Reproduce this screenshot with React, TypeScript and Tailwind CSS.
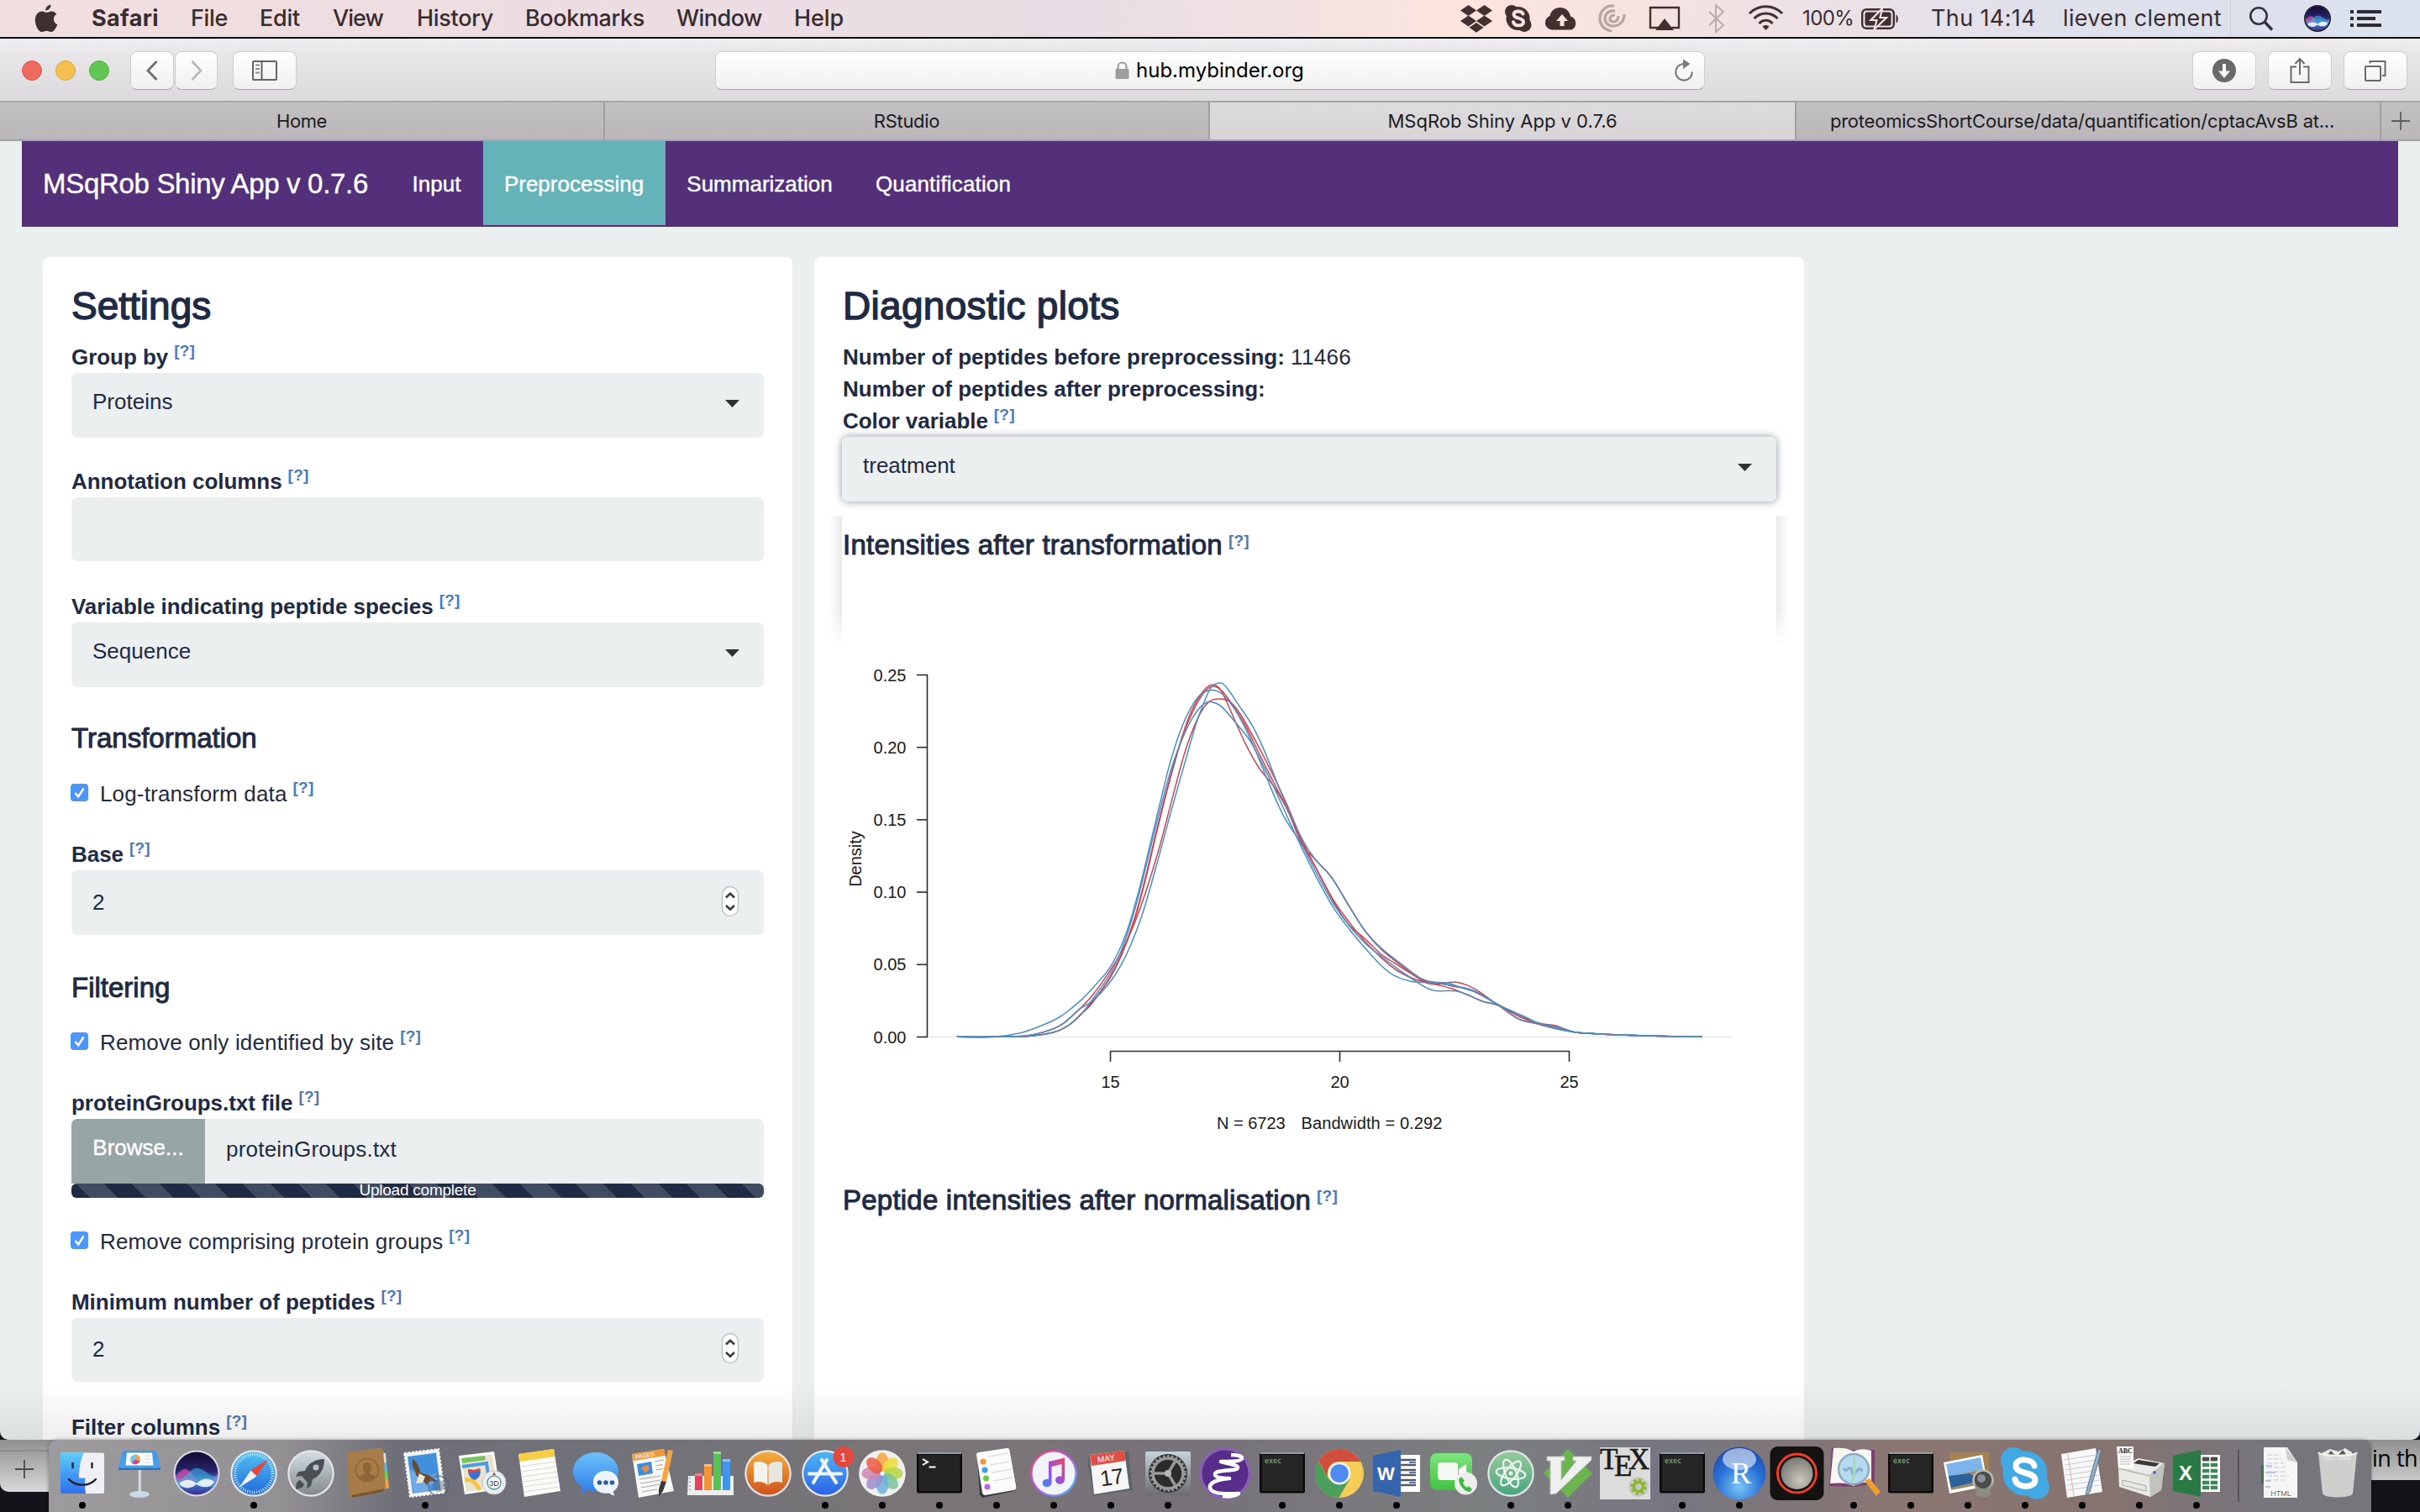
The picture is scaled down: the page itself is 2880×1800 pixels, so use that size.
import type { ReactNode } from "react";

/* ---------- menu bar ---------- */

const menus = [
  { label: "Safari", cls: "w-[118px] font-bold tracking-[0.37px]" },
  { label: "File", cls: "w-[82px] tracking-[-0.35px]" },
  { label: "Edit", cls: "w-[87px] tracking-[-0.24px]" },
  { label: "View", cls: "w-[100px] tracking-[-0.94px]" },
  { label: "History", cls: "w-[129px] tracking-[-0.3px]" },
  { label: "Bookmarks", cls: "w-[180px] tracking-[-0.36px]" },
  { label: "Window", cls: "w-[140px] tracking-[-0.51px]" },
  { label: "Help", cls: "w-[60px] tracking-[-0.12px]" },
];

function MenuBar() {
  return (
    <div className="flex h-[46px] shrink-0 items-start border-b-2 border-black bg-linear-to-r from-[#f1dedf] via-[#eadde4] via-38% to-[#dbe2ee]">
      <div className="flex h-11 w-full items-center bg-linear-to-r from-transparent from-45% via-[#fde4de] via-60% to-transparent to-85% text-[27px] leading-[44px] font-medium text-[#3a2b2e]">
        <svg className="ml-[41px] h-[34px] w-[28px] shrink-0" viewBox="0 0 28 34" fill="#3e3031">
          <path d="M19.5 0.5c.3 3.6-2.800 7-6.200 7C12.900 4 16.200.8 19.500.5z" />
          <path d="M14.400 10c1.600 0 3.400-1.500 6-1.500 2.200 0 4.500 1.200 6 3.300-5.200 3-4.400 10.300.9 12.400C25.900 28.300 22.900 33 20 33c-2.200 0-2.900-1.300-5.600-1.300S10.700 33 8.700 33C5 33 .8 25.400.8 19c0-6.300 4-10.400 8-10.400 2.400 0 4.200 1.400 5.600 1.400z" />
        </svg>
        <div className="ml-[40px] flex font-[Inter,sans-serif]">
          {menus.map((m) => (
            <span key={m.label} className={m.cls}>
              {m.label}
            </span>
          ))}
        </div>
        <svg className="ml-auto h-[44px] w-[390px] shrink-0" viewBox="1738 0 390 44" fill="#432f2f">
          <path d="M1750.500 6l9.500 6.500-9.500 6.500-9.500-6.500zM1769.500 6l9.500 6.500-9.500 6.500-9.500-6.500zM1750.500 18.500l9.500 6.500-9.500 6.500-9.500-6.500zM1769.500 18.500l9.500 6.500-9.500 6.500-9.500-6.500zM1760 27l8.500 5.700-8.500 6-8.500-6z" />
          <circle cx="1802" cy="14" r="8" />
          <circle cx="1817" cy="29.500" r="8.500" />
          <circle cx="1809.500" cy="22" r="14" />
          <path d="M1815.500 16.500c-2-4.500-11-4-11 .8 0 5.700 11.500 2.900 11.500 8.900 0 5.300-10.500 5.800-12 0" fill="none" stroke="#f8e4e1" strokeWidth="4" strokeLinecap="round" />
          <path d="M1850 35.500a8.500 8.500 0 0 1-2.500-16.500c1-6 6-10 12-10 7 0 11.500 4.500 12.500 10.500a8.500 8.500 0 0 1 1 16z" />
          <path d="M1862 17l7 8h-4.500v6h-5v-6h-4.500z" fill="#f9e5e1" />
          <g fill="none" stroke="#432f2f" strokeOpacity=".35" strokeWidth="3.200">
            <path d="M1924 7c-10-1-17 6-17 15 0 8 6 14 14 15" />
            <path d="M1925 13c-7-1-12 3-12 9 0 5 4 9 9 9 8 0 14-5 14-14" />
            <path d="M1925 18c-4 0-6 2-6 4.500s2 3.500 4 3.500c4 0 6-3 6-7" />
          </g>
          <path d="M1976 33h-9V9h34v24h-9" fill="none" stroke="#432f2f" strokeWidth="2.400" />
          <path d="M1984 22l11 14h-22z" />
          <path d="M2037 14l17 16-9 8V6l9 8-17 16" fill="none" stroke="#432f2f" strokeOpacity=".3" strokeWidth="2" />
          <g fill="none" stroke="#3f2f31" strokeWidth="3">
            <path d="M2085 16c11-11 28-11 39 0" />
            <path d="M2090.500 22c8-8 20-8 28 0" />
            <path d="M2096.500 28c5-5 11-5 16 0" />
          </g>
          <path d="M2104.500 36l-4-4.500c2-2 6-2 8 0z" />
        </svg>
        <span className="ml-[20px] w-[70px] shrink-0 font-[Inter,sans-serif] text-[24px] font-normal tracking-[-0.6px]">100%</span>
        <svg className="h-[44px] w-[46px] shrink-0" viewBox="0 0 46 44" fill="#3f2f31">
          <rect x="1.200" y="11.200" width="37.600" height="22.600" rx="5" fill="none" stroke="#3f2f31" strokeWidth="2.400" />
          <rect x="4.500" y="14.500" width="31" height="16" rx="2.500" />
          <path d="M41.500 17.500c3 1 3 9 0 10z" />
          <path d="M25 10L11.500 24h7l-3 11L30 21h-7.500z" stroke="#f3e4e6" strokeWidth="2.200" />
        </svg>
        <span className="ml-[37px] w-[157px] shrink-0 font-[Inter,sans-serif] font-normal tracking-[0.38px]">Thu 14:14</span>
        <span className="w-[199px] shrink-0 font-[Inter,sans-serif] font-normal tracking-[0.35px]">lieven clement</span>
        <div className="h-full w-px shrink-0 bg-[#d4cedb]" />
        <svg className="ml-[20px] h-[44px] w-[32px] shrink-0" viewBox="0 0 32 44" fill="none" stroke="#36303a" strokeWidth="2.600">
          <circle cx="13" cy="19" r="9.700" />
          <path d="M20 26l9 9.500" strokeWidth="3.400" />
        </svg>
        <svg className="ml-[35px] h-[32px] w-[32px] shrink-0" viewBox="6 6 56 56">
          <SiriArt />
          <circle cx="34" cy="34" r="26.500" fill="none" stroke="#23202e" strokeWidth="3" />
        </svg>
        <svg className="mr-[46px] ml-[23px] h-[44px] w-[37px] shrink-0" viewBox="0 0 37 44" fill="#2e2b36">
          <path d="M0 12h4v4H0zM8 12h29v4H8zM0 20h4v4H0zM8 20h22v4H8zM0 28h4v4H0zM8 28h29v4H8z" />
        </svg>
      </div>
    </div>
  );
}

/* ---------- browser chrome ---------- */

const chromeButton =
  "flex h-[46px] items-center justify-center rounded-[8px] border border-[#cfcdd0] border-b-[#a9a7aa] bg-linear-to-b from-white to-[#f1f0f1]";

function Toolbar() {
  return (
    <div className="flex h-[74px] shrink-0 items-center rounded-t-[10px] bg-linear-to-b from-[#f0eef1] via-[#e9e7ea] via-20% to-[#dcdadd] pt-[2px] pr-[15px] pl-[26px]">
      <div className="flex gap-4">
        <div className="size-6 rounded-full border border-[#d6574c] bg-[#ee6a5f]" />
        <div className="size-6 rounded-full border border-[#d9a43c] bg-[#f5bf4f]" />
        <div className="size-6 rounded-full border border-[#54ad41] bg-[#62c655]" />
      </div>
      <div className={`ml-[25px] w-[52px] ${chromeButton}`}>
        <svg className="h-6 w-4" viewBox="0 0 16 24" fill="none" stroke="#6f6e70" strokeWidth="2.800">
          <path d="M13.500 1L3 12l10.500 11" />
        </svg>
      </div>
      <div className={`ml-px w-[51px] ${chromeButton}`}>
        <svg className="h-6 w-4" viewBox="0 0 16 24" fill="none" stroke="#b9b8ba" strokeWidth="2.800">
          <path d="M2.500 1L13 12 2.500 23" />
        </svg>
      </div>
      <div className={`ml-[18px] w-[76px] ${chromeButton}`}>
        <svg className="h-[26px] w-[32px]" viewBox="0 0 32 26" fill="none" stroke="#646365" strokeWidth="2">
          <rect x="2" y="2" width="28" height="22" rx="1" />
          <path d="M12.500 2v22" />
          <path d="M5 6.500h5M5 11h5M5 15.500h5" stroke="#8d8c8e" />
        </svg>
      </div>
      <div className="ml-[498px] flex h-[46px] w-[1178px] items-center rounded-[8px] border border-[#cfcdd0] border-b-[#a9a7aa] bg-linear-to-b from-white to-[#f1f0f1]">
        <svg className="ml-[475px] h-[22px] w-[17px]" viewBox="0 0 17 22">
          <rect x="0.500" y="9" width="16" height="12" rx="1" fill="#9c9b9d" />
          <path d="M3.500 10V6.500a5 5 0 0 1 10 0V10" fill="none" stroke="#9c9b9d" strokeWidth="2.200" />
        </svg>
        <span className="ml-[8px] font-[Inter,sans-serif] text-[24px] leading-[44px] text-black">hub.mybinder.org</span>
        <svg className="mr-[12px] ml-auto h-[30px] w-[24px]" viewBox="0 0 24 30" fill="none" stroke="#7b7a7c" strokeWidth="2.200">
          <path d="M11 7a9.800 9.800 0 1 0 10.800 9.500" />
          <path d="M11 1.500l8.500 5.500-8.500 6z" fill="#7b7a7c" stroke="none" />
        </svg>
      </div>
      <div className="ml-auto flex gap-[14px]">
        <div className={`w-[76px] ${chromeButton}`}>
          <svg className="size-[30px]" viewBox="0 0 30 30">
            <circle cx="15" cy="15" r="14" fill="#6a696b" />
            <path d="M13 7h4v8.500h5L15 24l-7-8.500h5z" fill="#fafafa" />
          </svg>
        </div>
        <div className={`w-[76px] ${chromeButton}`}>
          <svg className="h-[34px] w-[26px]" viewBox="0 0 26 34" fill="none" stroke="#6a696b" strokeWidth="2">
            <path d="M9 12.500H2.500v18.500h21V12.500H17" />
            <path d="M13 22V3M7.500 9L13 3l5.500 6" />
          </svg>
        </div>
        <div className={`w-[76px] ${chromeButton}`}>
          <svg className="size-[28px]" viewBox="0 0 28 28" fill="none" stroke="#6a696b" strokeWidth="2">
            <rect x="2" y="9" width="18" height="17" rx="1" />
            <path d="M7.500 5.500V3h18v17H22" />
          </svg>
        </div>
      </div>
    </div>
  );
}

function TabStrip() {
  const tab = "flex h-full items-center justify-center border-r-2 border-[#a19fa2]";
  return (
    <div className="flex h-[48px] shrink-0 border-y-2 border-[#a5a3a6] bg-linear-to-b from-[#c2c0c3] to-[#b9b7ba] font-[Inter,sans-serif] text-[22px] leading-[44px] text-[#1c1b1d]">
      <div className={`w-[720px] tracking-[-0.41px] ${tab}`}>Home</div>
      <div className={`w-[720px] tracking-[-0.3px] ${tab}`}>RStudio</div>
      <div className={`w-[698px] bg-linear-to-b from-[#dddbde] to-[#d6d4d7] ${tab}`}>MSqRob Shiny App v 0.7.6</div>
      <div className={`w-[696px] pr-[14px] tracking-[-0.22px] ${tab}`}>
        proteomicsShortCourse/data/quantification/cptacAvsB at...
      </div>
      <div className="flex flex-1 items-center justify-center">
        <svg className="size-[22px]" viewBox="0 0 22 22" stroke="#5f5e60" strokeWidth="1.800">
          <path d="M11 0v22M0 11h22" />
        </svg>
      </div>
    </div>
  );
}

/* ---------- page ---------- */

function NavBar() {
  return (
    <div className="mx-[26px] flex h-[102px] shrink-0 bg-[#54307b] text-[26px] leading-[102px] text-white [-webkit-text-stroke:0.4px_white]">
      <div className="w-[439px] pl-[25px] text-[33px] tracking-[-0.31px]">MSqRob Shiny App v 0.7.6</div>
      <div className="w-[110px] pr-px text-center">Input</div>
      <div className="h-[100px] w-[217px] bg-[#64b3b9] pr-px text-center">Preprocessing</div>
      <div className="w-[224px] text-center">Summarization</div>
      <div className="w-[213px] text-center tracking-[0.16px]">Quantification</div>
    </div>
  );
}

function Help() {
  return <span className="ml-[7px] align-[10px] text-[19px] leading-[0] font-bold tracking-[0.2px] text-[#4a7ab8]">[?]</span>;
}

function Label({ children }: { children: ReactNode }) {
  return (
    <div className="h-[38px] text-[26px] leading-[38px] font-bold tracking-[-0.04px]">
      {children}
      <Help />
    </div>
  );
}

function Heading({ children, help }: { children: ReactNode; help?: boolean }) {
  return (
    <div className="h-[44px] pt-px text-[33px] leading-[44px]">
      <span className="[-webkit-text-stroke:1px]">{children}</span>
      {help && <Help />}
    </div>
  );
}

function Caret() {
  return (
    <svg className="mb-[3px] h-[9px] w-[17px]" viewBox="0 0 17 9" fill="#2f3133">
      <path d="M0 0h17L8.500 9z" />
    </svg>
  );
}

function SelectBox({ value }: { value?: string }) {
  return (
    <div className="flex h-[76.500px] items-center justify-between rounded-[7px] bg-[#ebeff0] pr-[29px] pl-[25px]">
      <span className="pb-[9px] text-[26px] leading-[38px]">{value}</span>
      {value && <Caret />}
    </div>
  );
}

function NumberBox({ value }: { value: string }) {
  return (
    <div className="flex h-[76.500px] items-center justify-between rounded-[7px] bg-[#ebeff0] pr-[29px] pl-[25px]">
      <span className="pb-px text-[26px] leading-[38px]">{value}</span>
      <svg className="mb-[3px] h-[38px] w-[22px]" viewBox="0 0 22 38">
        <rect x="1.500" y="1.500" width="19" height="35" rx="9.500" fill="#fff" stroke="#bfc1c2" strokeWidth="1.400" />
        <path d="M6 14.500l5-4.800 5 4.800M6 24l5 4.800 5-4.800" fill="none" stroke="#3c3c3c" strokeWidth="2.600" />
      </svg>
    </div>
  );
}

function CheckRow({ children }: { children: ReactNode }) {
  return (
    <div className="flex h-[38px] items-center text-[26px] leading-[38px] tracking-[0.16px]">
      <svg className="-ml-px mr-[14px] mb-[3px] size-[21px]" viewBox="0 0 21 21">
        <rect width="21" height="21" rx="4" fill="#4d95f7" />
        <path d="M5.500 11l3.700 4.500 6.300-10" fill="none" stroke="#fff" strokeWidth="2.400" />
      </svg>
      <span>
        {children}
        <Help />
      </span>
    </div>
  );
}

function Settings() {
  return (
    <section className="h-[1500px] w-[892px] shrink-0 rounded-[8px] bg-white pt-[30px] pr-[34px] pl-[34px]">
      <h2 className="mb-[14px] h-[56px] text-[46px] leading-[56px] [-webkit-text-stroke:1.4px]">Settings</h2>
      <Label>Group by</Label>
      <SelectBox value="Proteins" />
      <div className="h-[33px]" />
      <Label>Annotation columns</Label>
      <SelectBox />
      <div className="h-[35px]" />
      <Label>Variable indicating peptide species</Label>
      <SelectBox value="Sequence" />
      <div className="h-[38.500px]" />
      <Heading>Transformation</Heading>
      <div className="h-[25.500px]" />
      <CheckRow>Log-transform data</CheckRow>
      <div className="h-[34.500px]" />
      <Label>Base</Label>
      <NumberBox value="2" />
      <div className="h-[40px]" />
      <Heading>Filtering</Heading>
      <div className="h-[25px]" />
      <CheckRow>Remove only identified by site</CheckRow>
      <div className="h-[34px]" />
      <Label>proteinGroups.txt file</Label>
      <div className="flex h-[77px] overflow-hidden rounded-t-[7px] bg-[#ebeff0] text-[26px] leading-[38px]">
        <div className="w-[159px] bg-[#97a5a6] pt-[15px] text-center text-white [-webkit-text-stroke:0.4px_white]">Browse...</div>
        <div className="pt-[17px] pl-[25px] tracking-[0.21px]">proteinGroups.txt</div>
      </div>
      <div className="h-[17px] rounded-[6px] bg-[#1f2a44] bg-[linear-gradient(45deg,rgba(255,255,255,.15)_25%,transparent_25%,transparent_50%,rgba(255,255,255,.15)_50%,rgba(255,255,255,.15)_75%,transparent_75%)] bg-[length:66px_66px] bg-[position:6px_0px] text-center text-[19px] leading-[15px] tracking-[-0.24px] text-white">
        Upload complete
      </div>
      <div className="h-[33px]" />
      <CheckRow>Remove comprising protein groups</CheckRow>
      <div className="h-[34px]" />
      <Label>Minimum number of peptides</Label>
      <NumberBox value="2" />
      <div className="h-[34.500px]" />
      <Label>Filter columns</Label>
    </section>
  );
}

/* Density curves, as control points on a local grid of the plot. */
type Pt = [number, number];
const outerTail: Pt[] = [[-421, 1333], [-300, 1332], [-227, 1320], [-165, 1296], [-103, 1263], [-41, 1208]];
const midTail: Pt[] = [[-421, 1333], [-300, 1333], [-200, 1328], [-130, 1308], [-90, 1285], [-41, 1235]];
const innerTail: Pt[] = [[-421, 1333], [-300, 1333], [-206, 1331], [-124, 1318], [-72, 1290], [-31, 1247]];
const end: Pt[] = [[1500, 1316], [1568, 1322], [1700, 1328], [1800, 1331], [1897, 1333]];
const RED = "#cc4450";
const BLUE = "#4a8ec4";

const curves: { color: string; pts: Pt[] }[] = [
  { color: RED, pts: [...midTail, [0, 1185], [50, 1105], [90, 1030], [130, 930], [165, 820], [210, 650], [250, 475], [290, 308], [330, 190], [362, 137], [395, 126], [430, 138], [460, 180], [500, 260], [550, 370], [600, 490], [650, 625], [700, 740], [760, 870], [800, 935], [850, 985], [900, 1040], [940, 1070], [1010, 1120], [1060, 1142], [1120, 1162], [1170, 1185], [1220, 1208], [1265, 1222], [1320, 1255], [1390, 1284], [1440, 1293], ...end] },
  { color: RED, pts: [...innerTail, [0, 1212], [50, 1130], [90, 1040], [130, 915], [165, 765], [200, 595], [240, 415], [280, 258], [310, 165], [345, 98], [372, 76], [395, 88], [417, 135], [445, 208], [480, 295], [520, 375], [565, 440], [610, 530], [650, 640], [695, 702], [743, 762], [800, 868], [850, 958], [900, 1022], [960, 1078], [1020, 1128], [1060, 1145], [1130, 1138], [1180, 1156], [1220, 1185], [1265, 1222], [1320, 1266], [1370, 1283], [1450, 1300], ...end] },
  { color: RED, pts: [...innerTail, [0, 1208], [50, 1132], [90, 1043], [130, 920], [165, 772], [200, 602], [240, 420], [280, 262], [312, 172], [346, 105], [375, 81], [405, 100], [440, 155], [480, 230], [520, 325], [560, 415], [610, 530], [650, 635], [700, 740], [750, 845], [800, 925], [850, 995], [900, 1052], [950, 1098], [1010, 1130], [1060, 1138], [1120, 1152], [1180, 1168], [1265, 1220], [1330, 1262], [1400, 1292], ...end] },
  { color: BLUE, pts: [...outerTail, [0, 1160], [50, 1093], [85, 1020], [115, 930], [147, 800], [180, 645], [210, 500], [240, 362], [272, 245], [300, 172], [330, 118], [365, 95], [400, 105], [435, 150], [470, 218], [510, 318], [550, 430], [595, 545], [650, 645], [700, 755], [750, 858], [800, 938], [850, 1000], [900, 1047], [950, 1090], [1010, 1138], [1060, 1167], [1130, 1169], [1170, 1184], [1210, 1205], [1265, 1220], [1300, 1250], [1340, 1276], [1390, 1286], [1450, 1300], ...end] },
  { color: BLUE, pts: [...innerTail, [0, 1200], [50, 1118], [90, 1025], [120, 925], [150, 802], [182, 652], [215, 502], [245, 378], [282, 262], [318, 182], [348, 143], [371, 137], [400, 152], [440, 203], [490, 275], [530, 362], [570, 455], [610, 557], [650, 655], [700, 770], [750, 872], [800, 950], [850, 1018], [900, 1080], [940, 1115], [990, 1135], [1040, 1139], [1100, 1140], [1150, 1158], [1200, 1177], [1265, 1220], [1340, 1258], [1400, 1290], ...end] },
  { color: BLUE, pts: [...midTail, [0, 1205], [50, 1145], [90, 1075], [130, 975], [165, 860], [205, 697], [245, 527], [285, 365], [320, 225], [345, 145], [368, 88], [393, 69], [415, 82], [455, 148], [500, 227], [540, 325], [580, 442], [620, 550], [660, 642], [697, 704], [745, 765], [800, 870], [850, 957], [900, 1018], [960, 1072], [1020, 1123], [1070, 1140], [1130, 1152], [1190, 1170], [1265, 1220], [1320, 1250], [1390, 1286], [1450, 1306], ...end] },
];

function toPath(pts: Pt[]) {
  const p = pts.map(([x, y]): Pt => [298 + x / 2.6133, 20 + y / 3]);
  let d = `M${p[0][0]} ${p[0][1]}`;
  for (let i = 0; i < p.length - 1; i++) {
    const a = p[Math.max(i - 1, 0)];
    const b = p[i];
    const c = p[i + 1];
    const e = p[Math.min(i + 2, p.length - 1)];
    d += `C${b[0] + (c[0] - a[0]) / 6} ${b[1] + (c[1] - a[1]) / 6} ${c[0] - (e[0] - b[0]) / 6} ${c[1] - (e[1] - b[1]) / 6} ${c[0]} ${c[1]}`;
  }
  return d;
}

const yTicks = ["0.25", "0.20", "0.15", "0.10", "0.05", "0.00"];
const xTicks = ["15", "20", "25"];

function DensityPlot() {
  return (
    <svg className="-ml-px block h-[620px] w-[1111px] font-['Liberation_Sans',sans-serif] text-[20px]" viewBox="0 0 1111 620" fill="#1a1a1a">
      <path d="M101 464.500H1059" stroke="#e8e8e8" strokeWidth="1.500" />
      <g stroke="#2b2b2b" strokeWidth="1.600" fill="none">
        <path d="M101.500 33.500V464.500" />
        <path d="M319.500 481.500H865.500" />
        {yTicks.map((t, i) => (
          <path key={t} d={`M89 ${33.5 + i * 86.2}h13`} />
        ))}
        {xTicks.map((t, i) => (
          <path key={t} d={`M${319.5 + i * 273} 481v13`} />
        ))}
      </g>
      {yTicks.map((t, i) => (
        <text key={t} x="76.500" y={40.5 + i * 86.2} textAnchor="end">
          {t}
        </text>
      ))}
      {xTicks.map((t, i) => (
        <text key={t} x={319.5 + i * 273} y="525" textAnchor="middle">
          {t}
        </text>
      ))}
      <text transform="translate(22.500 252.500) rotate(-90)" textAnchor="middle">
        Density
      </text>
      <text x="446" y="574">N = 6723</text>
      <text x="546.500" y="574" className="tracking-[0.1px]">
        Bandwidth = 0.292
      </text>
      {curves.map((c, i) => (
        <path key={i} d={toPath(c.pts)} fill="none" stroke={c.color} strokeWidth="1.500" />
      ))}
    </svg>
  );
}

function Diagnostics() {
  return (
    <section className="h-[1500px] w-[1178px] shrink-0 rounded-[8px] bg-white pt-[30px] pr-[33px] pl-[34px]">
      <h2 className="mb-[14px] h-[56px] text-[46px] leading-[56px] tracking-[0.3px] [-webkit-text-stroke:1.4px]">Diagnostic plots</h2>
      <div className="text-[26px] leading-[38px]">
        <p>
          <b>Number of peptides before preprocessing:</b> <span className="tracking-[0.33px]">11466</span>
        </p>
        <p className="font-bold">Number of peptides after preprocessing:</p>
      </div>
      <Label>Color variable</Label>
      <div className="-ml-px rounded-[7px] shadow-[0_0_10px_rgba(44,62,80,0.55)]">
        <SelectBox value="treatment" />
      </div>
      <div className="-mr-[18px] -ml-[19px] mt-[17.500px] flex h-[156px]">
        <div className="w-[18px] bg-linear-to-l from-black/[0.085] to-transparent to-85% mask-b-from-70% mask-b-to-100%" />
        <div className="flex-1 pt-[11.500px] pl-px tracking-[0.25px]">
          <Heading help>Intensities after transformation</Heading>
        </div>
        <div className="w-[18px] bg-linear-to-r from-black/[0.085] to-transparent to-85% mask-b-from-70% mask-b-to-100%" />
      </div>
      <DensityPlot />
      <div className="pt-[16px] tracking-[0.22px]">
        <Heading help>Peptide intensities after normalisation</Heading>
      </div>
    </section>
  );
}

/* ---------- dock ---------- */

function SiriArt() {
  return (
    <g>
      <defs>
        <linearGradient id="siriBg" x1="0" y1="0" x2="0" y2="1">
          <stop offset="0" stopColor="#150a33" />
          <stop offset=".45" stopColor="#27246b" />
          <stop offset=".7" stopColor="#3f86cf" />
          <stop offset="1" stopColor="#3a2c8f" />
        </linearGradient>
      </defs>
      <circle cx="34" cy="34" r="27.500" fill="#dcdde3" />
      <circle cx="34" cy="34" r="25.500" fill="url(#siriBg)" />
      <path d="M9 38c8-12 14-12 22 0s18 10 28-4c0 8-1 10-3 13-8 2-14-2-22-3s-16 4-22 2c-2-3-3-5-3-8z" fill="#d64fb0" opacity=".75" />
      <path d="M10 40c10 6 14-14 26-12 10 2 12 10 23 10 0 6-3 10-5 13-10-4-30-8-40 0-2-3-4-7-4-11z" fill="#3fb3e6" opacity=".6" />
      <path d="M13 46c8-6 14-5 21 0 8-8 16-6 21-2-4 6-8 7-14 6-4-1-6-2-7-3-6 5-15 7-21-1z" fill="#fff" opacity=".85" />
    </g>
  );
}

const Gradient = ({ id, a, b }: { id: string; a: string; b: string }) => (
  <linearGradient id={id} x1="0" y1="0" x2="0" y2="1">
    <stop offset="0" stopColor={a} />
    <stop offset="1" stopColor={b} />
  </linearGradient>
);

function Disc({ id, a, b, children }: { id: string; a: string; b: string; children?: ReactNode }) {
  return (
    <g>
      <Gradient id={id} a={a} b={b} />
      <circle cx="34" cy="34" r="27.800" fill="#e4e6e8" />
      <circle cx="34" cy="34" r="25.600" fill={`url(#${id})`} />
      {children}
    </g>
  );
}

function ExecArt() {
  return (
    <g>
      <rect x="7" y="9.500" width="54" height="48" rx="2" fill="#0b0b0b" />
      <rect x="9.500" y="12" width="49" height="43" fill="#252525" />
      <path d="M8 10h52" stroke="#b9c4cc" strokeWidth="1.500" />
      <text x="13" y="21.500" fontSize="8.300" fill="#74d874" className="font-['DejaVu_Sans_Mono',monospace]">
        exec
      </text>
    </g>
  );
}

const petals: [string, number][] = [
  ["#f6a13a", 0], ["#eedd3f", 45], ["#b7d544", 90], ["#7cc39b", 135],
  ["#6fb0e2", 180], ["#9a8fd0", 225], ["#cf85b4", 270], ["#ee5b45", 315],
];

const dockItems: { name: string; running?: boolean; art: ReactNode }[] = [
  {
    name: "finder", running: true, art: (
      <g>
        <Gradient id="finderG" a="#5fcdf8" b="#2f6fec" />
        <rect x="8" y="9.500" width="52" height="48.500" rx="2" fill="#eef0f5" />
        <path d="M36 9.500H10a2 2 0 0 0-2 2V56a2 2 0 0 0 2 2h28c-1-6-1-12-.5-18.500H30C30 29 31.500 18 36 9.500z" fill="url(#finderG)" />
        <path d="M22.500 22v5M45.500 22v5" stroke="#1b2230" strokeWidth="2.400" strokeLinecap="round" />
        <path d="M18 41c8 9 24 9 32 0" fill="none" stroke="#16181f" strokeWidth="2.200" strokeLinecap="round" />
      </g>
    ),
  },
  {
    name: "keynote", art: (
      <g>
        <path d="M32.800 28h3v31h-3z" fill="#d5dce2" />
        <ellipse cx="34" cy="59" rx="12" ry="4" fill="#c9dae6" />
        <Gradient id="keyG" a="#3f97e6" b="#4aa2ef" />
        <path d="M14 7h40l5 20.500v2.500H9v-2.500z" fill="url(#keyG)" />
        <path d="M19 9.500h30l1.500 15h-33z" fill="#fff" />
        <circle cx="29" cy="17.500" r="6" fill="#6bc7e8" />
        <path d="M29 17.500v-6a6 6 0 0 1 5.500 8z" fill="#f0a43c" />
        <path d="M29 17.500l5.500 2a6 6 0 0 1-10 1.500z" fill="#d9467e" />
        <path d="M40 13h7M40 17h7M40 21h7" stroke="#ccc" />
        <path d="M9 27.500h50V30H9z" fill="#2a74bd" />
      </g>
    ),
  },
  { name: "siri", art: <SiriArt /> },
  {
    name: "safari", running: true, art: (
      <Disc id="safG" a="#52c2f1" b="#2268dd">
        <circle cx="34" cy="34" r="22.500" fill="none" stroke="#d9efff" strokeWidth="3.500" strokeDasharray="1 1.800" />
        <path d="M51.500 17L37.500 37.500 30.500 30.500z" fill="#e8453c" />
        <path d="M16.500 51L30.500 30.500 37.500 37.500z" fill="#f2f2f2" />
      </Disc>
    ),
  },
  {
    name: "launchpad", art: (
      <Disc id="launchG" a="#d3dde1" b="#83898d">
        <path d="M50 17c-12 0-20 6-23 14l-8 1-3 6 7-1 7 8-1 7 5-3 2-8c9-4 14-12 14-24z" fill="#4b5054" />
        <path d="M21 42c-4 1-5 6-5 11 5-1 9-2 10-6z" fill="#4b5054" />
        <circle cx="40" cy="27" r="3.500" fill="#b9c2c7" />
      </Disc>
    ),
  },
  {
    name: "contacts", art: (
      <g>
        <path d="M51 9l4 1 3 41-4 2z" fill="#ddd" />
        <path d="M53 21l3 0 1 10h-4z" fill="#54b8e0" />
        <path d="M53 31h4l1 10h-4z" fill="#72cc55" />
        <path d="M54 41h4l1 11h-5z" fill="#f0a23c" />
        <path d="M9 9l38-5 5 1 3 47-5 3-36 8-3-2z" fill="#a87c48" />
        <path d="M14 60l36-7 4-1-3 4-36 7z" fill="#7c5527" />
        <circle cx="33" cy="30" r="13.500" fill="none" stroke="#8d6536" strokeWidth="1.600" />
        <path d="M33 21c4 0 5.500 3 5 7-.5 3-2 4-2 6 1 2 5 2 7 4-4 6-16 6-20 0 2-2 6-2 7-4 0-2-1.500-3-2-6-.5-4 1-7 5-7z" fill="#8d6536" />
      </g>
    ),
  },
  {
    name: "mail", running: true, art: (
      <g>
        <path d="M9 10l41-5 7 52-41 5z" fill="#f4f4f0" stroke="#fff" strokeWidth="2" strokeDasharray="2.500 2" />
        <path d="M13 14l34-4.500 5.500 44L19 58z" fill="#4290dc" />
        <path d="M14.500 30c8 2 14 6 20 10l12-6 2 6-10 10 2 5-20 3z" fill="#8dc0ee" opacity=".6" />
        <path d="M19 17c5 3 8 9 9 16 6 2 14 3 20 11l-9-1-3 5-5-6c-5-2-9-6-9-11-3-4-4-9-3-14z" fill="#6d4a2c" />
        <path d="M27 34l7 4-3 7-8 1z" fill="#efe6d4" />
        <circle cx="50" cy="49" r="12" fill="none" stroke="#56657a" strokeOpacity=".6" strokeWidth="2" />
        <circle cx="50" cy="49" r="7" fill="#56657a" opacity=".45" />
      </g>
    ),
  },
  {
    name: "maps", art: (
      <g>
        <path d="M6 13l42-5 7 45-42 6z" fill="#fff" />
        <path d="M9 16l37-4.500 5.500 39L15 56z" fill="#eae2cd" />
        <path d="M9 16l28-3 .8 5L10 22z" fill="#7cc25c" />
        <path d="M10 26l29-4 3 20" fill="none" stroke="#4a9de0" strokeWidth="4" />
        <path d="M13 42c9-2 14 4 18 12" fill="none" stroke="#f4c63a" strokeWidth="5" />
        <path d="M17 29l7 1 7-2c2 6 0 11-6 14-6-2-8-7-8-13z" fill="#3d6fd0" />
        <path d="M17 29l7 1 7-2 .5 3.500-14 1.500z" fill="#dd4a3f" />
        <circle cx="48" cy="45" r="14" fill="#eceef0" stroke="#c8cacc" />
        <circle cx="48" cy="45" r="8" fill="#fff" stroke="#4f9a9e" strokeWidth="1.400" />
        <text x="48" y="48.500" textAnchor="middle" fontSize="9" fill="#333">3D</text>
        <path d="M48 32.500l2 3.500h-4z" fill="#d33" />
      </g>
    ),
  },
  {
    name: "notes", art: (
      <g>
        <path d="M9 11l42-6 8 50-43 7z" fill="#fbfbf8" />
        <path d="M9 11l42-6 1.500 9L10.500 20z" fill="#f6cd45" />
        <path d="M12 26l41-6M13 32l41-6M14 38l41-6M15 44l41-6M15.500 50l41-6M16 56l41-6" stroke="#d9d9d4" />
      </g>
    ),
  },
  {
    name: "messages", art: (
      <g>
        <Gradient id="msgG" a="#6dc1fa" b="#2f7be8" />
        <path d="M33 9c15 0 27 10 27 23S48 55 33 55c-4 0-7-.5-10-1.500C20 57 17 58 14 58c2-2 3-5 3-8C10 46 6 39.500 6 32 6 19 18 9 33 9z" fill="url(#msgG)" />
        <path d="M45 31c9 0 15 6 15 13.500 0 5-2.500 8.500-6 11 0 2 .5 4 2 5-3 0-5-1-7-3-12 2-19-5-19-13S36 31 45 31z" fill="#eef4fb" />
        <g fill="#2d5ea8">
          <circle cx="37.500" cy="45" r="2.800" /><circle cx="45" cy="45" r="2.800" /><circle cx="52.500" cy="45" r="2.800" />
        </g>
      </g>
    ),
  },
  {
    name: "pages", art: (
      <g>
        <path d="M8 11l38-6 12 50-42 8z" fill="#f8f8f6" />
        <path d="M8 11l38-6 2 8-38 6z" fill="#ee9a38" />
        <text transform="rotate(-9 12 17)" x="12" y="17" fontSize="7" fill="#fff">PAGES</text>
        <path d="M14 23l17-3 2 14-17 3z" fill="#3e8ee0" />
        <path d="M19 27l8-3 2 4-5 6z" fill="#f08a34" />
        <path d="M35 20l11-2M36 25l9-1.500M37 30l8-1.500M17 41l25-4M18 46l24-4M19 51l22-4M20 56l18-3" stroke="#a9a9a9" strokeWidth="1.200" />
        <path d="M51 6l6 1-8 37-6-1z" fill="#f2a545" />
        <path d="M43 43l6 1-4 11-5 7 0-9z" fill="#3b3b3d" />
      </g>
    ),
  },
  {
    name: "numbers", art: (
      <g>
        <path d="M7 37h54v23H6z" fill="#eeeeee" />
        <path d="M9 39v18" stroke="#999" strokeWidth="1.500" strokeDasharray="1.500 3" />
        <path d="M15 34h9v20h-9z" fill="#e0435b" /><path d="M26 23h9v31h-9z" fill="#f09437" />
        <path d="M37 8h9v46h-9z" fill="#55c452" /><path d="M48 17h9v37h-9z" fill="#3f97ec" />
        <path d="M15 34h9v3h-9z" fill="#ef8290" /><path d="M26 23h9v3h-9z" fill="#f8bd72" /><path d="M37 8h9v3h-9z" fill="#93e08a" /><path d="M48 17h9v3h-9z" fill="#85c4f7" />
      </g>
    ),
  },
  {
    name: "ibooks", art: (
      <Disc id="bookG" a="#f6ae3a" b="#cf5220">
        <path d="M33.500 24c-4-4-10-5-16.500-3v24c6-2 12.500-1.500 16.500 3z" fill="#f6f3ee" />
        <path d="M34.500 24c4-4 10-5 16.500-3v24c-6-2-12.500-1.500-16.500 3z" fill="#e9e5df" />
      </Disc>
    ),
  },
  {
    name: "appstore", running: true, art: (
      <g>
        <Disc id="appG" a="#4cb8f6" b="#2b62e6">
          <g stroke="#f1f4f8" strokeWidth="4.200" strokeLinecap="round" fill="none">
            <path d="M36 18L20 45" /><path d="M30 18l17 27" /><path d="M15 34.500h38" />
          </g>
        </Disc>
        <circle cx="56" cy="14.500" r="12.500" fill="#e2483d" />
        <text x="55.500" y="20" textAnchor="middle" fontSize="15" fill="#fff">1</text>
      </g>
    ),
  },
  {
    name: "photos", running: true, art: (
      <g>
        <circle cx="34" cy="34" r="27.800" fill="#efefef" />
        {petals.map(([c, r]) => (
          <ellipse key={r} cx="34" cy="21" rx="7.500" ry="11.500" fill={c} opacity=".85" transform={`rotate(${r} 34 34)`} />
        ))}
        <circle cx="34" cy="34" r="2.500" fill="#fff" />
      </g>
    ),
  },
  {
    name: "terminal", running: true, art: (
      <g>
        <rect x="7" y="9.500" width="54" height="48" rx="2" fill="#0b0b0b" />
        <rect x="9.500" y="12" width="49" height="43" fill="#242424" />
        <path d="M8 10h52" stroke="#b9c4cc" strokeWidth="1.500" />
        <path d="M14 17l6 3.500-6 3.500" fill="none" stroke="#fff" strokeWidth="2" />
        <path d="M21.500 26.500h8" stroke="#fff" strokeWidth="2" />
      </g>
    ),
  },
  {
    name: "reminders", running: true, art: (
      <g>
        <path d="M11 14l38-9 9 46-3 4-38 8-3-3z" fill="#3a3a3c" />
        <path d="M10 12c0-2 1-3 3-3l33-5c2 0 3 .5 3.500 2.500l8 44c0 2-1 3-3 3.500l-34 6c-2 0-3-1-3.500-3z" fill="#fbfbfb" />
        <circle cx="18" cy="20" r="3.500" fill="#f0953a" /><circle cx="20" cy="30" r="3.500" fill="#3f9cf0" />
        <circle cx="21.500" cy="40" r="3.500" fill="#6ccb45" /><circle cx="23" cy="50" r="3.500" fill="#b96ad6" />
        <path d="M24 14l24-4M26 24l24-4M28 33l24-4M30 43l24-4" stroke="#d5d5d5" />
      </g>
    ),
  },
  {
    name: "itunes", running: true, art: (
      <g>
        <linearGradient id="ringG" x1="0" y1="0" x2="1" y2="1"><stop offset="0" stopColor="#f24b60" /><stop offset=".5" stopColor="#b15ae2" /><stop offset="1" stopColor="#38c2f4" /></linearGradient>
        <linearGradient id="noteG" x1="1" y1="0" x2="0" y2="1"><stop offset="0" stopColor="#f1476a" /><stop offset=".6" stopColor="#8a55e8" /><stop offset="1" stopColor="#3e8ff0" /></linearGradient>
        <circle cx="34" cy="34" r="28" fill="url(#ringG)" />
        <circle cx="34" cy="34" r="25.500" fill="#f2f3f8" />
        <path d="M28 20l19-4.500v26.500a5.500 4.800 0 1 1-3.500-4.500V23l-12 3v19.500a5.500 4.800 0 1 1-3.500-4.500z" fill="url(#noteG)" />
      </g>
    ),
  },
  {
    name: "calendar", running: true, art: (
      <g>
        <path d="M6 16l4-3 45-5 5 46-47 7z" fill="#5c6468" />
        <path d="M9 12l41-5 6 45-42 7z" fill="#f7f7f7" />
        <path d="M9 12l41-5 2 12-41 6z" fill="#dc5046" />
        <g transform="rotate(-8 32 34)">
          <text x="31" y="19.500" textAnchor="middle" fontSize="10" fill="#fff">MAY</text>
          <text x="34" y="48" textAnchor="middle" fontSize="26" fill="#2b2b2b" className="tracking-[-1px]">17</text>
        </g>
      </g>
    ),
  },
  {
    name: "preferences", running: true, art: (
      <g>
        <Gradient id="prefG" a="#c6d3da" b="#6b6d70" />
        <rect x="7" y="8" width="54" height="52" rx="2" fill="url(#prefG)" />
        <circle cx="34" cy="34" r="23" fill="#2b2b2c" />
        <circle cx="34" cy="34" r="18" fill="none" stroke="#98999b" strokeWidth="3.500" />
        <circle cx="34" cy="34" r="20.500" fill="none" stroke="#98999b" strokeWidth="3" strokeDasharray="2.500 2.500" />
        <path d="M34 34l9-15M34 34l9 15M34 34H17" stroke="#98999b" strokeWidth="3.500" />
        <circle cx="34" cy="34" r="4" fill="#b5b6b8" />
      </g>
    ),
  },
  {
    name: "emacs", art: (
      <g>
        <circle cx="34" cy="34" r="31" fill="#8661ad" />
        <circle cx="34" cy="34" r="27.500" fill="#582c8a" />
        <path d="M41 12c6 0 13 1 13 4 0 4-16 4-25 4 10 3 20 4 20 7 0 5-26 2-27 8 0 4 8 5 17 5-14 1-24 5-23 11 1 7 17 8 34 7-5 3-12 4-19 3" fill="none" stroke="#fff" strokeWidth="4.600" strokeLinejoin="round" />
      </g>
    ),
  },
  { name: "exec-1", running: true, art: <ExecArt /> },
  {
    name: "chrome", running: true, art: (
      <g>
        <circle cx="34" cy="34" r="29" fill="#f6cd56" />
        <path d="M8.800 19.500a29 29 0 0 0 24.500 43.500l13-22L34 34 21.500 41z" fill="#4a9f5d" />
        <path d="M9 19.300A29 29 0 0 1 59.300 20H34a14 14 0 0 0-13 20z" fill="#d14d3e" />
        <circle cx="34" cy="34" r="13.500" fill="#f3f3f3" />
        <circle cx="34" cy="34" r="10.800" fill="#4f8bef" />
      </g>
    ),
  },
  {
    name: "word", running: true, art: (
      <g>
        <path d="M36 12h26v44H36z" fill="#fff" />
        <path d="M39 18h18M39 24h18M39 30h18M39 36h18M39 42h18M39 48h18" stroke="#55585e" strokeWidth="2.400" />
        <path d="M49 21h8M49 33h8M49 45h8" stroke="#4d7ac2" strokeWidth="2" />
        <path d="M6 13l33-7v56L6 55z" fill="#3563ac" />
        <text x="21.500" y="42" textAnchor="middle" fontSize="22" fontWeight="bold" fill="#fff">W</text>
      </g>
    ),
  },
  {
    name: "facetime", art: (
      <g>
        <Gradient id="ftG" a="#7fe57f" b="#43c143" />
        <rect x="6" y="10" width="50" height="44" rx="8" fill="url(#ftG)" />
        <rect x="15" y="21" width="24" height="21" rx="4" fill="#f6f8f6" />
        <path d="M40 29l9-6v18l-9-6z" fill="#f6f8f6" />
        <circle cx="48.500" cy="46" r="13.500" fill="#ecefec" />
        <path d="M43 38l4 5-2 2c1 3 3 5 5 6l2-2 4 4-3 3c-6 0-13-8-13-15z" fill="#3fb944" />
      </g>
    ),
  },
  {
    name: "atom", running: true, art: (
      <Disc id="atomG" a="#97c99c" b="#4aa680">
        <g fill="none" stroke="#f0f5ef" strokeWidth="2.200">
          <ellipse cx="34" cy="34" rx="17.500" ry="6.500" transform="rotate(8 34 34)" />
          <ellipse cx="34" cy="34" rx="17.500" ry="6.500" transform="rotate(68 34 34)" />
          <ellipse cx="34" cy="34" rx="17.500" ry="6.500" transform="rotate(128 34 34)" />
        </g>
        <circle cx="34" cy="34" r="2.500" fill="#f0f5ef" />
      </Disc>
    ),
  },
  {
    name: "vim", running: true, art: (
      <g>
        <path d="M34 5l29 29-29 29L5 34z" fill="#6cb44d" />
        <path d="M9 14h21v5h-4v23l18-23h-4v-5h22v4L20 58l-7 1V19H9z" fill="#f0f0f0" stroke="#b9bdb7" />
      </g>
    ),
  },
  {
    name: "tex", art: (
      <g>
        <rect x="4" y="3" width="60" height="62" fill="#dcdcdc" />
        <g fill="#1a1a1a" stroke="#1a1a1a" strokeWidth=".6" fontSize="35" className="font-['Liberation_Serif',serif]">
          <text x="4" y="29">T</text><text x="21" y="37">E</text><text x="38" y="29">X</text>
        </g>
        <circle cx="50" cy="50" r="12" fill="#c8cbc5" />
        <circle cx="50" cy="50" r="5.500" fill="none" stroke="#8db52f" strokeWidth="3.500" />
        <circle cx="50" cy="50" r="8.300" fill="none" stroke="#8db52f" strokeWidth="3" strokeDasharray="3.500 3" />
      </g>
    ),
  },
  { name: "exec-2", running: true, art: <ExecArt /> },
  {
    name: "r", running: true, art: (
      <g>
        <radialGradient id="rG" cx=".5" cy=".75" r=".75"><stop offset="0" stopColor="#7cc6f4" /><stop offset=".55" stopColor="#2b74d8" /><stop offset="1" stopColor="#1c49ae" /></radialGradient>
        <circle cx="34" cy="34" r="31.500" fill="url(#rG)" />
        <ellipse cx="34" cy="17" rx="20" ry="13" fill="#fff" opacity=".55" />
        <text x="36" y="46" textAnchor="middle" fontSize="36" fill="#fff" className="font-['Liberation_Serif',serif]">R</text>
      </g>
    ),
  },
  {
    name: "record", art: (
      <g>
        <radialGradient id="knobG" cx=".6" cy=".7" r=".7"><stop offset="0" stopColor="#c9c7bd" /><stop offset="1" stopColor="#7b7a74" /></radialGradient>
        <rect x="2.500" y="2" width="64" height="64" rx="9" fill="#141312" />
        <circle cx="34.500" cy="34" r="23" fill="none" stroke="#ef3b2c" strokeWidth="3" />
        <circle cx="34.500" cy="34" r="19" fill="url(#knobG)" />
      </g>
    ),
  },
  {
    name: "dictionary", running: true, art: (
      <g>
        <path d="M8 4l26 2 25 0 0 40-24 4-30 -1z" fill="#7c3f72" />
        <path d="M10 4c10-1 18 0 24 4 6-4 14-3 21-1v38c-8-1-15 0-21 4-8-4-18-4-28-3z" fill="#f6f6f2" />
        <circle cx="34" cy="29" r="18" fill="#b5d9ee" stroke="#8fa9bd" strokeWidth="2.500" />
        <path d="M22 28c4 8 8-8 10 4s8-12 12 0" fill="none" stroke="#86aecb" strokeWidth="3" />
        <path d="M34 14c2 8 1 20-1 30" fill="none" stroke="#a5dbb5" strokeWidth="3" />
        <path d="M47 43l6-3 13 16-5 5z" fill="#ee9d2c" />
      </g>
    ),
  },
  { name: "exec-3", running: true, art: <ExecArt /> },
  {
    name: "preview", running: true, art: (
      <g>
        <path d="M12 9h47v36H12z" fill="#a48252" />
        <path d="M5 21l46-9 7 37-46 9z" fill="#fff" />
        <path d="M8 23l41-8 3 14-41 9z" fill="#7db4ea" />
        <path d="M11 38l41-9 3 17-41 8z" fill="#9a8b6c" />
        <path d="M11 37l25-3 12 9-34 8z" fill="#2c619e" />
        <circle cx="52" cy="42" r="11.500" fill="#4a4b4c" stroke="#b9b9b6" strokeWidth="2.500" />
        <path d="M42 46l2 14c5 3 12 3 16 0l3-14c-5 8-16 8-21 0z" fill="#8e8d84" />
        <circle cx="50" cy="40" r="5" fill="#8a8f98" />
      </g>
    ),
  },
  {
    name: "skype", running: true, art: (
      <g>
        <circle cx="20" cy="18" r="15" fill="#42a9e4" /><circle cx="48" cy="50" r="15" fill="#42a9e4" /><circle cx="34" cy="34" r="26.500" fill="#42a9e4" />
        <path d="M45 25c-2-9-22-10-22 0 0 11 23 6 23 17 0 10-22 10-24-1" fill="none" stroke="#fff" strokeWidth="7" strokeLinecap="round" />
      </g>
    ),
  },
  {
    name: "textedit", running: true, art: (
      <g>
        <path d="M9 11l41-7 8 52-42 7z" fill="#f8f8f8" />
        <path d="M12 18l38-6M13 24l38-6M14 30l38-6M15 36l38-6M16 42l38-6M16.500 48l38-6M17 54l38-6" stroke="#c7ccd6" />
        <path d="M17 11l7 50" stroke="#e8b0b0" />
        <path d="M53 5l4 1-14 50-5 6 1-7z" fill="#8fb0cf" stroke="#5d6e80" />
      </g>
    ),
  },
  {
    name: "printer", running: true, art: (
      <g>
        <path d="M9 28l24-12 31 6-4 32-13 8L10 50z" fill="#e9e9e6" />
        <path d="M9 28l37 9 18-15" fill="none" stroke="#b5b5b2" strokeWidth="1.500" />
        <path d="M46 37l1 25 13-8 4-32z" fill="#c2c2bf" />
        <path d="M27 22l26 4 5-4-25-4z" fill="#3a3a3a" />
        <path d="M14 42l28 7v6l-28-7z" fill="none" stroke="#a5a5a2" />
        <path d="M7 2h20v26H9z" fill="#fbfbfa" />
        <text x="9" y="10" fontSize="8" fontWeight="bold" fill="#222" className="font-['Liberation_Serif',serif]">ABC</text>
        <path d="M11 14h13M11 17h13M11 20h13M11 23h13" stroke="#bbb" />
        <circle cx="52" cy="33" r="2" fill="#5b6fc0" />
      </g>
    ),
  },
  {
    name: "excel", running: true, art: (
      <g>
        <path d="M38 12h24v44H38z" fill="#fff" />
        <path d="M41 17h18M41 24h18M41 31h18M41 38h18M41 45h18M41 51h18" stroke="#3f8758" strokeWidth="4.500" />
        <path d="M41 17h18" stroke="#4b4b4b" strokeWidth="4.500" />
        <path d="M50 12v44" stroke="#fff" strokeWidth="1.500" />
        <path d="M6 13l33-7v56L6 55z" fill="#2b7a46" />
        <text x="21" y="42" textAnchor="middle" fontSize="24" fontWeight="bold" fill="#fff">X</text>
      </g>
    ),
  },
];

function DockCell({ running, children }: { running?: boolean; children: ReactNode }) {
  return (
    <div className="flex w-[68px] shrink-0 flex-col items-center pt-[6px]">
      <svg className="h-[68px] w-[68px] overflow-visible font-['Liberation_Sans',sans-serif]" viewBox="0 0 68 68">
        {children}
      </svg>
      {running && <div className="size-[8px] rounded-full bg-black" />}
    </div>
  );
}

function Dock() {
  return (
    <div className="absolute bottom-0 left-[58px] flex h-[86px] w-[2764px] rounded-t-[10px] bg-[linear-gradient(90deg,#9d9b9d_0%,#929092_10%,#6f6f79_15%,#72727a_25%,#7a7576_38%,#77727a_50%,#7c7f80_62%,#767680_70%,#8b7672_80%,#86736f_88%,#78757c_95%,#75757c_100%)] px-[6px] shadow-[0_0_4px_rgba(0,0,0,0.35)]">
      {dockItems.map((d) => (
        <DockCell key={d.name} running={d.running}>
          {d.art}
        </DockCell>
      ))}
      <div className="flex w-[32px] shrink-0 justify-center pt-[12px]">
        <div className="h-[62px] w-[2px] bg-[#55535a]" />
      </div>
      <DockCell>
        <path d="M14 3h28l12 18v42H14z" fill="#f6f6f6" />
        <path d="M40 3l14 18-12-3z" fill="#d0d0d0" />
        <path d="M18 12h14M18 17h18M18 22h20M18 27h24M18 32h22M18 37h26M18 42h24" stroke="#c9c9d6" strokeDasharray="6 2" />
        <path d="M16 33h12M16 25h8M16 43h6M16 50h6" stroke="#8d8de0" />
        <path d="M11 24h3v22h-3z" fill="#2f7a48" />
        <text x="34.500" y="61" textAnchor="middle" fontSize="9" fill="#6b6b6b">HTML</text>
      </DockCell>
      <DockCell>
        <path d="M15 10l10-5 10 3 8-4 8 5-2 9H18z" fill="#e9e9e9" />
        <path d="M20 14l6-7 5 6zM34 13l6-7 6 8z" fill="#5d5a57" />
        <path d="M24 16l6-5 5 6z" fill="#3a8fb5" />
        <path d="M11 9c3 4 43 4 46 0l-5 49c-2 6-34 6-36 0z" fill="#dcdcd9" opacity=".88" />
        <path d="M11 9c3 5 43 5 46 0" fill="none" stroke="#f4f4f2" strokeWidth="2.200" />
      </DockCell>
    </div>
  );
}

/* Windows and desktop that show below the front window, at either side of the dock. */
function Backdrop() {
  return (
    <div className="flex h-[86px] shrink-0 justify-between bg-[#15131a]">
      <div className="h-[62px] w-[70px] rounded-bl-[10px] bg-linear-to-b from-[#8f8f8f] to-[#d9d9d9]">
        <div className="h-[14px] border-b-2 border-[#8b8b8b]" />
        <svg className="mt-[10px] ml-[18px] size-[22px]" viewBox="0 0 22 22" stroke="#4b4b4b" strokeWidth="1.800">
          <path d="M11 0v22M0 11h22" />
        </svg>
      </div>
      <div className="h-[48px] w-[70px] bg-linear-to-b from-[#8f8f8f] to-[#c9c9c9] pl-[13px] font-['Open_Sans',sans-serif] text-[27px] leading-[43px] tracking-[-0.5px] whitespace-nowrap text-black">
        in th
      </div>
    </div>
  );
}

export default function App() {
  return (
    <div className="relative flex h-[1800px] w-[2880px] flex-col overflow-hidden bg-[#15131a]">
      <MenuBar />
      <div className="flex min-h-0 flex-1 flex-col overflow-hidden rounded-b-[10px] bg-[#ebeff0]">
        <Toolbar />
        <TabStrip />
        <div className="relative flex min-h-0 flex-1 flex-col overflow-hidden font-['Liberation_Sans',sans-serif] text-[#1f2a44]">
          <NavBar />
          <div className="mt-[36px] ml-[51px] flex gap-[26px]">
            <Settings />
            <Diagnostics />
          </div>
          <div className="absolute inset-x-0 bottom-0 h-[70px] bg-linear-to-b from-transparent to-black/[0.07]" />
        </div>
      </div>
      <Backdrop />
      <Dock />
    </div>
  );
}
